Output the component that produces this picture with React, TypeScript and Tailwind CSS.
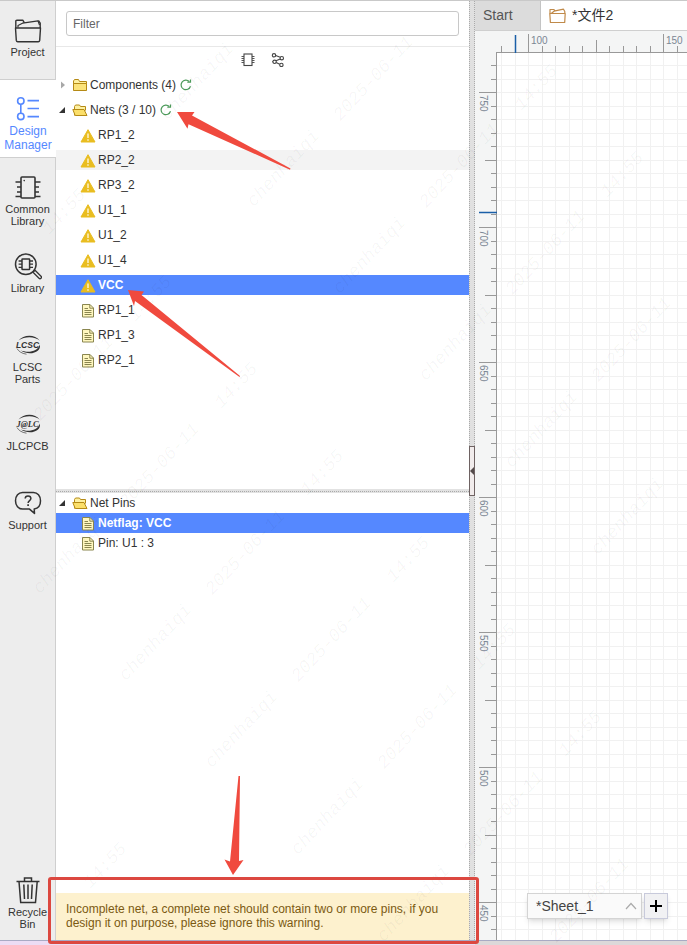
import { useState, type ReactNode } from "react";

type IconProps = { className?: string };

type SideItem = {
  label: string;
  icon: ReactNode;
};

const WARNING_NETS = ["RP1_2", "RP2_2", "RP3_2", "U1_1", "U1_2", "U1_4", "VCC"];
const OTHER_NETS = ["RP1_1", "RP1_3", "RP2_1"];
const HOVERED_NET = "RP2_2";
const NET_PINS = ["Netflag: VCC", "Pin: U1 : 3"];

const WATERMARKS = [
  { text: "chenhaiqi", x: 155, y: 642 },
  { text: "2025-06-11", x: 245, y: 552 },
  { text: "14:55", x: 322, y: 472 },
  { text: "chenhaiqi", x: 283, y: 168 },
  { text: "2025-06-11", x: 373, y: 78 },
  { text: "14:55", x: 450, y: 0 },
  { text: "14:55", x: 105, y: 865 },
];

const range = (from: number, to: number) => Array.from({ length: to - from }, (_, i) => from + i);

/* ---------- icons ---------- */

function ProjectIcon() {
  return (
    <svg viewBox="0 0 28 28" className="size-7" fill="none" stroke="#333" strokeWidth="1.4" strokeLinejoin="round">
      <path d="M1.5 12h25l-.8 12.4a1.5 1.5 0 0 1-1.5 1.3H3.8a1.5 1.5 0 0 1-1.5-1.3z" />
      <path d="M1.8 12V5.2c0-.6.4-1 1-1h6l1.6 2.6M26.2 12V7.200L24.500 4.500" />
      <path d="M4 11.500V9.500L8.500 7.200 24 4.800 25.500 9" strokeWidth="1.2" />
    </svg>
  );
}

function DesignIcon() {
  return (
    <svg viewBox="0 0 28 28" className="size-7" fill="none" stroke="#5588ff" strokeWidth="1.6">
      <circle cx="6.8" cy="6" r="3.2" />
      <circle cx="6.8" cy="21.4" r="3.2" />
      <path d="M6.8 9.2V18.200M13.5 5.6H25M13.5 13.5H25M13.5 21.6H25" />
    </svg>
  );
}

function ChipIcon() {
  return (
    <svg viewBox="0 0 28 28" className="size-7" fill="none" stroke="#333" strokeWidth="1.6">
      <rect x="7" y="4" width="14" height="21" rx="1" />
      <path d="M1.5 9H7M3 14h4M3 19h4M1.5 23.500H7M21 9h5.5M21 14h4M21 19h4M21 23.500h5.5" strokeWidth="1.4" />
      <circle cx="10.2" cy="7.6" r=".8" fill="#333" stroke="none" />
    </svg>
  );
}

function LibraryIcon() {
  return (
    <svg viewBox="0 0 28 28" className="size-7" fill="none" stroke="#333" strokeWidth="1.5">
      <circle cx="11.8" cy="12.2" r="10.3" />
      <rect x="8" y="7" width="7.6" height="10.6" rx=".5" />
      <path d="M4.6 9H8M4.6 12.2H8M4.6 15.4H8M15.6 9H19M15.6 12.2H19M15.6 15.4H19" strokeWidth="1.3" />
      <path d="M19 20.2l2-2 6 6a1.4 1.4 0 0 1-2 2z" strokeWidth="1.3" />
    </svg>
  );
}

function BrandIcon({ name, serif }: { name: string; serif?: boolean }) {
  return (
    <svg viewBox="0 0 28 28" className="size-7">
      <path d="M4.500 9.500C9.500 3.300 21 2.800 25.800 9.800 21.500 5.800 11.500 4.800 4.500 9.500z" fill="#333" />
      <path d="M25.800 13.500c2 7-9.500 12.500-19.300 5.800 8 3.300 17.300 1 19.300-5.800z" fill="#333" />
      <path d="M3 17.500c1.500 2.700 4.500 5 9.500 5.700" fill="none" stroke="#555" strokeWidth=".8" />
      <text
        x="13.500"
        y="16.500"
        textAnchor="middle"
        fontFamily={serif ? "Liberation Serif, serif" : "Liberation Sans, sans-serif"}
        fontSize="8.500"
        fontWeight="700"
        fontStyle="italic"
        fill="#333"
      >
        {name}
      </text>
    </svg>
  );
}

function SupportIcon() {
  return (
    <svg viewBox="0 0 28 28" className="size-7" fill="none" stroke="#333" strokeWidth="1.5" strokeLinejoin="round">
      <path d="M8.500 3.500h11c4 0 7 3.500 7 8.200s-2.500 7.800-6.300 8.200l.3 4.500-5-4.300h-7c-4 0-7-3.500-7-8.400s3-8.200 7-8.200z" />
      <path d="M11.200 9.600c0-1.700 1.200-2.700 2.800-2.700s2.900 1 2.900 2.600c0 2-2.800 2.200-2.800 4.400" />
      <path d="M14.100 15.200v1.700" strokeWidth="1.700" />
    </svg>
  );
}

function TrashIcon() {
  return (
    <svg viewBox="0 0 28 28" className="size-7" fill="none" stroke="#333" strokeWidth="1.500">
      <path d="M2.500 5.500h23M10.500 5.500V2h7V5.500M5 5.500l1.700 21h14.800L23.200 5.500M14 8.500v14.500M9.800 8.500l.7 14.500M18.200 8.500l-.7 14.500" />
    </svg>
  );
}

function FolderIcon({ open }: { open?: boolean }) {
  return (
    <svg viewBox="0 0 16 16" className="size-4 shrink-0" stroke="#b58a16" strokeWidth="1" strokeLinejoin="round">
      {open ? (
        <>
          <path d="M2.500 13.500V4.500l1-1.500h4l1 1.500h5v4" fill="#fdf0a0" />
          <path d="M.8 7.500h11.200l3 6H3.200z" fill="#fbdf6a" />
        </>
      ) : (
        <>
          <path d="M1.500 13V4l1-1.500h4L7.500 4.500h7V13z" fill="#fdf0a0" />
          <path d="M1.500 6.500h13v7h-13z" fill="#fbe37a" />
        </>
      )}
    </svg>
  );
}

function WarningIcon() {
  return (
    <svg viewBox="0 0 16 16" className="size-4 shrink-0">
      <path d="M8 2.700L15 15H1z" fill="#e9bd20" stroke="#e9bd20" strokeWidth="1" strokeLinejoin="round" />
      <path d="M8 6.500v4.600M8 12.200v1.500" stroke="#fff6d8" strokeWidth="1.400" />
    </svg>
  );
}

function DocIcon() {
  return (
    <svg viewBox="0 0 16 16" className="size-4 shrink-0">
      <path d="M2.500 2.500h7.500l3.500 3.500v9h-11z" fill="#fff7bf" stroke="#8a8650" />
      <path d="M9.800 2.500v3.700h3.700" fill="none" stroke="#8a8650" />
      <path d="M4.500 6.500h3.500M4.500 8.500h7M4.500 10.500h7M4.500 12.500h7" stroke="#8a8650" />
    </svg>
  );
}

function RefreshIcon() {
  return (
    <svg viewBox="0 0 12 12" className="size-3" fill="none" stroke="#4c9a5a" strokeWidth="1.200">
      <path d="M10.500 7.300A4.800 4.800 0 1 1 9.300 2.500" />
      <path d="M7.300 3.200h3.200V.4" />
    </svg>
  );
}

function SmallChipIcon() {
  return (
    <svg viewBox="0 0 14 14" className="size-3.5" fill="none" stroke="#444">
      <rect x="3" y="1" width="8" height="11.500" strokeWidth="1.100" />
      <path d="M.5 3.500H3M.5 5.500H3M.5 7.500H3M.5 9.500H3M11 3.500h2.500M11 5.500h2.500M11 7.500h2.500M11 9.500h2.500" strokeWidth=".9" />
    </svg>
  );
}

function NodesIcon() {
  return (
    <svg viewBox="0 0 14 14" className="size-3.5" fill="none" stroke="#444" strokeWidth="1.100">
      <circle cx="3" cy="2.300" r="1.700" />
      <circle cx="10.800" cy="5.200" r="1.700" />
      <circle cx="3.600" cy="8.800" r="1.700" />
      <circle cx="10.400" cy="11.900" r="1.700" />
      <path d="M4.700 2.600l4.500 1.700M5 7.800l4.200-1.800M5.200 9.500l3.500 1.800M1 8.800h.8" />
    </svg>
  );
}

function TabFolderIcon() {
  return (
    <svg viewBox="0 0 17 16" className="h-4 w-[17px]" fill="none" stroke="#c08a4a" strokeWidth="1.200" strokeLinejoin="round">
      <path d="M.8 5.500h15.400l-.5 9H1.400z" />
      <path d="M1 5.500V1.500h4l1 1.500M2.500 5.300L5 3.200l9.500-2 1.300 2.300v2" />
    </svg>
  );
}

function Expander({ open }: { open?: boolean }) {
  return (
    <svg viewBox="0 0 16 16" className="size-4 shrink-0">
      {open ? <path d="M9 5v6H3z" fill="#333" /> : <path d="M5 4.500v7l4-3.500z" fill="#a8a8a8" />}
    </svg>
  );
}

/* ---------- sidebar ---------- */

const SIDE_ITEMS: SideItem[] = [
  { label: "Project", icon: <ProjectIcon /> },
  { label: "Design Manager", icon: <DesignIcon /> },
  { label: "Common Library", icon: <ChipIcon /> },
  { label: "Library", icon: <LibraryIcon /> },
  { label: "LCSC Parts", icon: <BrandIcon name="LCSC" /> },
  { label: "JLCPCB", icon: <BrandIcon name="J@LC" serif /> },
  { label: "Support", icon: <SupportIcon /> },
];

function SideButton({ item, active }: { item: SideItem; active?: boolean }) {
  return (
    <button
      type="button"
      className={`flex h-[79px] w-14 shrink-0 flex-col items-center pt-[15px] first:h-[78px] ${
        active
          ? "gap-px border-y border-[#cfcfcf] bg-white text-[12px] leading-[14px] text-[#5588ff]"
          : "gap-0.5 border-r border-[#cfcfcf] text-[11px] leading-3 text-[#333]"
      }`}
    >
      {item.icon}
      <span className="w-min">{item.label}</span>
    </button>
  );
}

function Sidebar() {
  return (
    <nav className="flex w-14 shrink-0 flex-col bg-[#ededed]">
      {SIDE_ITEMS.map((item) => (
        <SideButton key={item.label} item={item} active={item.label === "Design Manager"} />
      ))}
      <div className="flex-1 border-r border-[#cfcfcf]" />
      <SideButton item={{ label: "Recycle Bin", icon: <TrashIcon /> }} />
    </nav>
  );
}

/* ---------- tree ---------- */

function Branch({ label, open, refresh }: { label: string; open?: boolean; refresh?: boolean }) {
  return (
    <div className="flex h-5 items-center">
      <Expander open={open} />
      <FolderIcon open={open} />
      <span className="ml-0.5">{label}</span>
      {refresh ? (
        <button type="button" aria-label={`Refresh ${label}`} className="ml-1">
          <RefreshIcon />
        </button>
      ) : null}
    </div>
  );
}

type LeafProps = {
  label: string;
  warning?: boolean;
  selected?: boolean;
  hovered?: boolean;
  onSelect: () => void;
};

function Leaf({ label, warning, selected, hovered, onSelect }: LeafProps) {
  return (
    <button
      type="button"
      onClick={onSelect}
      className={`flex h-5 w-full items-center gap-0.5 pl-6 text-left ${
        selected ? "bg-[#5588ff] font-bold text-white" : hovered ? "bg-[#f3f3f3]" : ""
      }`}
    >
      {warning ? <WarningIcon /> : <DocIcon />}
      {label}
    </button>
  );
}

function ManagerPanel() {
  const [net, setNet] = useState("VCC");
  const [pin, setPin] = useState("Netflag: VCC");

  return (
    <section className="flex min-w-0 flex-[413] flex-col bg-white text-[12px] leading-[14px] text-[#333]">
      <div className="flex min-h-0 flex-[488] flex-col">
        <div className="border-b border-[#e8e8e8] p-2.5">
          <input
            type="text"
            aria-label="Filter"
            placeholder="Filter"
            className="block h-[25px] w-full rounded-[3px] border border-[#c8c8c8] px-1.5 placeholder:text-[#666]"
          />
        </div>
        <div className="flex h-7 shrink-0 items-center justify-center gap-4 pb-0.5">
          <button type="button" aria-label="Components">
            <SmallChipIcon />
          </button>
          <button type="button" aria-label="Nets">
            <NodesIcon />
          </button>
        </div>
        <div className="flex flex-col gap-[5px]">
          <Branch label="Components (4)" refresh />
          <Branch label="Nets (3 / 10)" open refresh />
          {WARNING_NETS.map((name) => (
            <Leaf
              key={name}
              label={name}
              warning
              selected={net === name}
              hovered={name === HOVERED_NET}
              onSelect={() => setNet(name)}
            />
          ))}
          {OTHER_NETS.map((name) => (
            <Leaf key={name} label={name} selected={net === name} onSelect={() => setNet(name)} />
          ))}
        </div>
      </div>

      <div className="flex h-1 shrink-0 items-center bg-[#e2e2e2]">
        <div className="w-full border-t border-dotted border-[#aaa]" />
      </div>

      <div className="flex min-h-0 flex-[447] flex-col">
        <Branch label="Net Pins" open />
        {NET_PINS.map((name) => (
          <Leaf key={name} label={name} selected={pin === name} onSelect={() => setPin(name)} />
        ))}
        <div className="relative mt-auto bg-[#fdf1ce] px-2.5 pt-[9px] pb-2.5 text-[#7b5a12]">
          <p>
            Incomplete net, a complete net should contain two or more pins, if you design it on
            purpose, please ignore this warning.
          </p>
          <div className="absolute -top-4 -right-2.5 -bottom-1 -left-2 z-10 rounded-[3px] border-[3px] border-[#dc4840]" />
        </div>
      </div>
    </section>
  );
}

/* ---------- canvas ---------- */

function Splitter() {
  return (
    <div className="flex w-1.5 shrink-0 flex-col items-center justify-center border-x border-dotted border-[#aaa] bg-[#e0e0e0]">
      <button
        type="button"
        aria-label="Collapse panel"
        className="flex h-[50px] w-1.5 items-center justify-center border border-[#6e6262] bg-[#f1ecec]"
      >
        <svg viewBox="0 0 4 8" className="h-2 w-1">
          <path d="M4 0v8L0 4z" fill="#544b4b" />
        </svg>
      </button>
    </div>
  );
}

// one grid step is 13.5 units, a labelled mark falls on every tenth step
const STEP = 13.5;
const X_LABELS = [100, 150];
const Y_LABELS = [750, 700, 650, 600, 550, 500, 450];

function Canvas() {
  const columns = range(-2, 140).map((i) => ({ i, at: Math.round(53 + i * STEP) + 0.5 }));
  const rows = range(-2, 140).map((i) => ({ i, at: Math.round(61 + i * STEP) + 0.5 }));
  const tick = (i: number) => (i % 10 === 0 ? 18 : i % 5 === 0 ? 12 : 6);

  return (
    <svg className="block size-full bg-[#f4f5f5]" fontFamily="Liberation Sans, sans-serif" fontSize="10" fill="#7b8794">
      <rect x="22" y="21" width="100%" height="100%" fill="#fff" />
      <g stroke="#f1f1f1">
        {columns.map(({ i, at }) => (
          <line key={i} x1={at} y1="22" x2={at} y2="100%" />
        ))}
        {rows.filter(({ at }) => at > 22).map(({ i, at }) => (
          <line key={i} x1="22" y1={at} x2="100%" y2={at} />
        ))}
      </g>
      <g stroke="#999">
        <path d="M22 21.500H4000M21.500 21V4000" />
        {columns.map(({ i, at }) => (
          <line key={i} x1={at} y1={21 - tick(i)} x2={at} y2="21" />
        ))}
        {rows.filter(({ at }) => at > 22).map(({ i, at }) => (
          <line key={i} x1={22 - tick(i)} y1={at} x2="22" y2={at} />
        ))}
      </g>
      {X_LABELS.map((label, n) => (
        <text key={label} x={56 + n * 135} y="13">
          {label}
        </text>
      ))}
      {Y_LABELS.map((label, n) => (
        <text key={label} transform={`translate(5 ${64 + n * 135}) rotate(90)`}>
          {label}
        </text>
      ))}
      <path d="M40.500 4V22M4 181.500H22" stroke="#1a5fa8" strokeWidth="1.500" />
    </svg>
  );
}

function Editor() {
  return (
    <main className="relative flex min-w-0 flex-[212] flex-col">
      <div className="flex h-[30px] shrink-0 border-b border-[#cfcfcf] bg-white text-[14px]">
        <button type="button" className="w-[66px] border-r border-[#c4c4c4] bg-[#dcdcdc] pl-2 text-left text-[#555]">
          Start
        </button>
        <button type="button" className="flex items-center gap-1.5 px-2 text-[#333]">
          <TabFolderIcon />
          *文件2
        </button>
      </div>
      <div className="min-h-0 flex-1">
        <Canvas />
      </div>
      <div className="absolute bottom-[21px] left-[52px] flex gap-0.5 text-[14px] text-[#444]">
        <button
          type="button"
          className="flex h-[26px] w-[115px] items-center justify-between border border-[#d4d4d4] bg-[#fafafa] pr-1 pl-2 shadow-md"
        >
          *Sheet_1
          <svg viewBox="0 0 12 8" className="h-2 w-3" fill="none" stroke="#aaa" strokeWidth="1.200">
            <path d="M1 7l5-5.500L11 7" />
          </svg>
        </button>
        <button
          type="button"
          aria-label="Add sheet"
          className="flex h-[26px] w-6 items-center justify-center border border-[#c8cadb] bg-[#f1f1f3] shadow-md"
        >
          <svg viewBox="0 0 12 12" className="size-3" stroke="#000" strokeWidth="2">
            <path d="M6 0v12M0 6h12" />
          </svg>
        </button>
      </div>
    </main>
  );
}

/* ---------- overlays ---------- */

const MARKS = WATERMARKS.flatMap((mark) =>
  range(-9, 10).map((k) => ({ text: mark.text, x: mark.x + k * 86, y: mark.y + k * 87 }))
).filter(({ x, y }) => x > 20 && x < 660 && y > 20 && y < 920);

function Watermark({ className }: IconProps) {
  return (
    <svg
      className={className}
      fontFamily="Liberation Mono, monospace"
      fontSize="18"
      fontStyle="italic"
      fill="#000"
      fillOpacity="0.04"
      aria-hidden="true"
    >
      {MARKS.map(({ text, x, y }) => (
        <text key={`${x}:${y}`} textAnchor="middle" transform={`translate(${x + 4} ${y + 4}) rotate(-47)`}>
          {text}
        </text>
      ))}
    </svg>
  );
}

function Arrows({ className }: IconProps) {
  return (
    <svg className={className} fill="#f04a3e">
      <path d="M177 112l17.500 0-2.500 3.500 98.500 53-.5 1.200-101.500-45.500-1 4.500z" />
      <path d="M128 290l16 1.500-2.500 3.500 98.500 81-.5 1-104.500-76-1 5z" />
      <path d="M233 875l-8.500-15.500 5.500 2 8.500-85.500 1.500 0-1 85 4.500-1z" />
    </svg>
  );
}

export default function App() {
  return (
    <div className="relative flex h-screen flex-col overflow-hidden font-['Liberation_Sans','Noto_Sans_CJK_SC',sans-serif]">
      <div className="flex min-h-0 flex-1 border-t border-[#c9c9c9]">
        <Sidebar />
        <ManagerPanel />
        <Splitter />
        <Editor />
      </div>
      <div className="flex h-[5px] shrink-0 border-t border-[#a9aac4]">
        <div className="flex-[475] bg-[#ecdcf4]" />
        <div className="flex-[212] bg-[#dcd8d9]" />
      </div>
      <Watermark className="pointer-events-none absolute inset-0 size-full" />
      <Arrows className="pointer-events-none absolute inset-0 size-full" />
    </div>
  );
}
